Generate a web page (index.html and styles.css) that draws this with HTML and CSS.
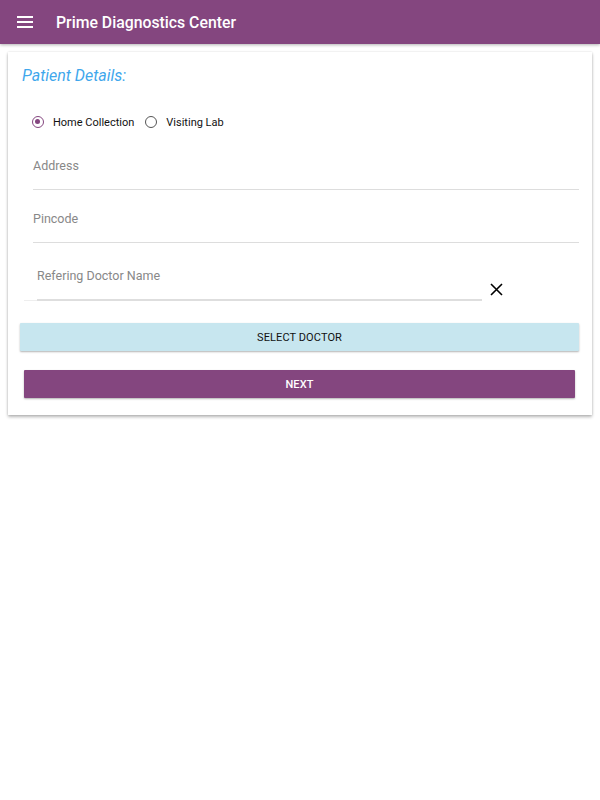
FILE: index.html
```html
<!DOCTYPE html>
<html>
<head>
<meta charset="utf-8">
<link rel="stylesheet" href="styles.css">
</head>
<body>
<header class="appbar">
  <svg class="menu" width="16" height="12" viewBox="0 0 16 12"><rect x="0" y="0" width="16" height="2" fill="#fff"/><rect x="0" y="5" width="16" height="2" fill="#fff"/><rect x="0" y="10" width="16" height="2" fill="#fff"/></svg>
  <span class="title">Prime Diagnostics Center</span>
</header>
<main class="card">
  <h2 class="heading">Patient Details:</h2>
  <div class="radios">
    <label class="radio"><span class="dot on"></span><span class="rlabel">Home Collection</span></label>
    <label class="radio"><span class="dot"></span><span class="rlabel">Visiting Lab</span></label>
  </div>
  <div class="field first">Address</div>
  <div class="field">Pincode</div>
  <div class="docrow">
    <div class="docfield"><span>Refering Doctor Name</span></div>
    <svg class="close" width="13" height="13" viewBox="0 0 13 13"><path d="M1 1 L12 12 M12 1 L1 12" stroke="#000" stroke-width="1.6" fill="none"/></svg>
  </div>
  <button class="btn select">SELECT DOCTOR</button>
  <button class="btn next">NEXT</button>
</main>
</body>
</html>
```
FILE: styles.css
```css
* { box-sizing: border-box; }
html, body { min-height: 100%; }
body { margin: 0; padding-bottom: 40px; font-family: Roboto, "Liberation Sans", sans-serif; background: #fff; }
.appbar {
  height: 44px; background: #84467f; display: flex; align-items: center;
  padding-left: 17px; box-shadow: 0 1px 3px rgba(0,0,0,0.3); position: relative; z-index: 1;
}
.menu { display: block; }
.title { color: #fff; font-size: 15.8px; font-weight: 500; margin-left: 23px; }
.card {
  margin: 8px 8px 0; background: #fff; height: 363px;
  box-shadow: 0 2px 3px rgba(0,0,0,0.28), 0 0 2px rgba(0,0,0,0.12);
  padding: 14px 12px 0 12px; display: flex; flex-direction: column;
}
.heading {
  margin: 0 0 0 2px; font-size: 16px; font-weight: 400; font-style: italic; color: #3fa7ec; line-height: 20px;
}
.radios { display: flex; margin: 27px 0 0 12px; height: 18px; align-items: center; }
.radio { display: flex; align-items: center; margin-right: 11px; }
.dot {
  width: 12px; height: 12px; border-radius: 50%; border: 1.6px solid #555; display: inline-block; position: relative;
}
.dot.on { border-color: #84467f; }
.dot.on::after {
  content: ""; position: absolute; left: 2px; top: 2px; width: 5px; height: 5px; border-radius: 50%; background: #84467f;
}
.rlabel { font-size: 11px; color: #111; margin-left: 9px; }
.field {
  margin: 0 0 0 13px; width: 546px; height: 53px; border-bottom: 1px solid #ddd;
  font-size: 12.5px; color: #888; padding-top: 21px;
}
.field.first { height: 59px; padding-top: 27px; }
.docrow { display: flex; align-items: flex-end; margin-left: 4px; height: 58px; }
.docfield {
  width: 458px; height: 58px; border-bottom: 1px solid #eee; padding: 25px 0 0 13px;
  font-size: 12.5px; color: #888; position: relative;
}
.docfield::after {
  content: ""; position: absolute; left: 13px; right: 0; bottom: -1px; height: 2px; background: #dedede;
}
.docfield span { display: block; }
.close { margin: 0 0 5px 8px; display: block; }
.btn {
  display: block; border: 0; height: 28px; font-family: Roboto, "Liberation Sans", sans-serif;
  font-size: 11px; font-weight: 500; letter-spacing: 0.1px; padding: 0; border-radius: 1px;
  box-shadow: 0 1px 2px rgba(0,0,0,0.3);
}
.select { margin: 22px 0 0 0; width: 559px; background: #c7e6ef; color: #111; font-weight: 400; }
.next { margin: 19px 0 0 4px; width: 551px; background: #84467f; color: #fff; }
```
